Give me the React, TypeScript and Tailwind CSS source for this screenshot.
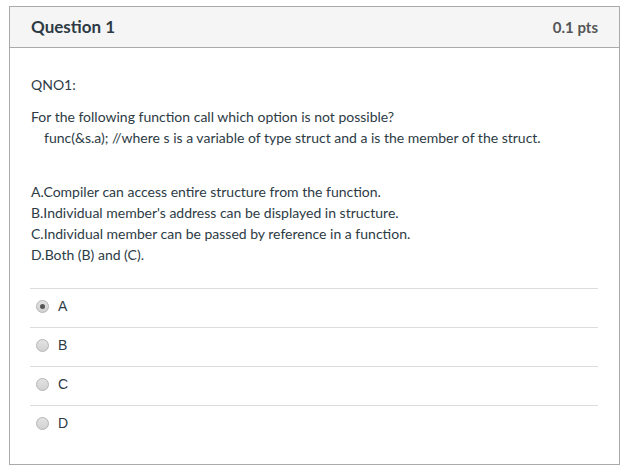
import React from "react";

const lato = { fontFamily: "Lato, 'Open Sans', sans-serif" };

function Radio({ checked }: { checked?: boolean }) {
  return (
    <div className="w-[13px] h-[13px] rounded-full border border-[#b4b4b4] bg-gradient-to-b from-[#e2e2e2] to-[#d2d2d2] flex items-center justify-center shrink-0">
      {checked ? <div className="w-[5px] h-[5px] rounded-full bg-[#555]" /> : null}
    </div>
  );
}

export default function App() {
  const opts = ["A", "B", "C", "D"];
  return (
    <div className="w-[624px] h-[471px] bg-white pt-[6px] pl-[9px]" style={lato}>
      <div className="w-[611px] h-[459px] border border-[#aaaaaa] flex flex-col">
        <div className="h-[41px] bg-[#f5f5f5] border-b border-[#aaaaaa] flex items-center justify-between px-[21px]">
          <div className="text-[17px] font-bold text-[#2d3b45]">Question 1</div>
          <div className="text-[15px] font-bold text-[#555555]">0.1 pts</div>
        </div>
        <div className="pt-[26px] px-[21px] text-[14px] leading-[21px] text-[#2d3b45]">
          <div>QNO1:</div>
          <div className="mt-[11px]">For the following function call which option is not possible?</div>
          <div className="pl-[13px]">func(&amp;s.a); //where s is a variable of type struct and a is the member of the struct.</div>
          <div className="mt-[33px]">A.Compiler can access entire structure from the function.</div>
          <div>B.Individual member's address can be displayed in structure.</div>
          <div>C.Individual member can be passed by reference in a function.</div>
          <div>D.Both (B) and (C).</div>
          <div className="mt-[23px] ml-[-1px]">
            {opts.map((o, i) => (
              <div key={o} className="h-[39px] border-t border-[#dddddd] flex items-start pt-[9px] pl-[6px] gap-[9px]">
                <div className="h-[16px] flex items-center">
                  <Radio checked={i === 0} />
                </div>
                <span className="text-[14px] leading-[16px] text-[#2d3b45]" style={{ fontFamily: "'Liberation Sans', Arial, sans-serif" }}>
                  {o}
                </span>
              </div>
            ))}
          </div>
        </div>
      </div>
    </div>
  );
}
